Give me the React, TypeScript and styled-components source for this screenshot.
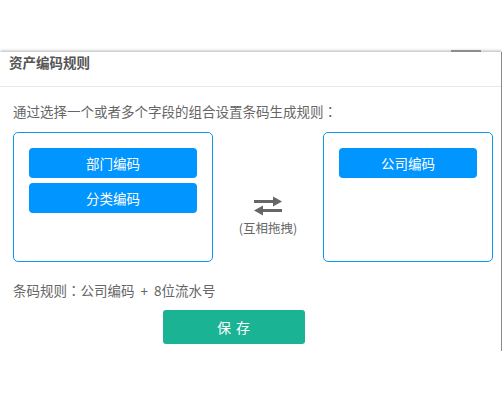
import styled, { createGlobalStyle } from 'styled-components';

// PARAM global
const Global = createGlobalStyle`
  html, body {
    margin: 0;
    padding: 0;
    background: #fff;
    font-family: "Noto Sans CJK SC", "Noto Sans", sans-serif;
  }
`;

// COMPONENT swap arrows
const SwapIcon = () => (
  <svg width='32' height='20' viewBox='0 0 32 20'>
    <path d='M2 5.5 H22' stroke='#666' strokeWidth='3' />
    <path d='M21 0.5 L30 5.5 L21 10.5 Z' fill='#666' />
    <path d='M30 14.5 H10' stroke='#666' strokeWidth='3' />
    <path d='M11 9.5 L2 14.5 L11 19.5 Z' fill='#666' />
  </svg>
);

// COMPONENT field chip
const FieldView = ({ label }: { label: string }) => <Rule.Field>{label}</Rule.Field>;

const App = () => {
  return (
    <>
      <Global />
      <Rule.Dialog>
        <Rule.Header>资产编码规则</Rule.Header>
        <Rule.Body>
          <Rule.Intro>
            通过选择一个或者多个字段的组合设置条码生成规则<Rule.Colon>：</Rule.Colon>
          </Rule.Intro>
          <Rule.Boards>
            <Rule.Board $width={200}>
              <FieldView label='部门编码' />
              <FieldView label='分类编码' />
            </Rule.Board>
            <Rule.Middle>
              <SwapIcon />
              <Rule.Hint>(互相拖拽)</Rule.Hint>
            </Rule.Middle>
            <Rule.Board $width={170}>
              <FieldView label='公司编码' />
            </Rule.Board>
          </Rule.Boards>
          <Rule.Summary>
            条码规则<Rule.Colon>：</Rule.Colon>公司编码 + 8位流水号
          </Rule.Summary>
          <Rule.Footer>
            <Rule.Save>保 存</Rule.Save>
          </Rule.Footer>
        </Rule.Body>
      </Rule.Dialog>
    </>
  );
};

// PARAM style
const Rule = {
  Dialog: styled.div`
    position: relative;
    margin-top: 52px;
    width: 501px;
    height: 299px;
    background: #fff;
    border-right: 1px solid #8a8a8a;
    box-shadow: 0 2px 2px rgba(0, 0, 0, 0.4), 0 -1px 3px rgba(0, 0, 0, 0.3);
    &::before,
    &::after {
      content: '';
      position: absolute;
      left: 451px;
      width: 30px;
      height: 2px;
      background: #8c8c8c;
    }
    &::before {
      top: -2px;
    }
    &::after {
      bottom: -2px;
    }
  `,
  Header: styled.div`
    height: 35px;
    box-sizing: border-box;
    padding: 0 0 0 9px;
    line-height: 20px;
    font-size: 13.5px;
    font-weight: bold;
    color: #555;
    border-bottom: 1px solid #e8e8e8;
  `,
  Body: styled.div`
    padding: 14px 8px 0 13px;
  `,
  Intro: styled.div`
    font-size: 13.5px;
    color: #666;
    line-height: 20px;
  `,
  Colon: styled.span`
    font-family: "Noto Sans CJK TC", sans-serif;
  `,
  Boards: styled.div`
    display: flex;
    margin-top: 11px;
  `,
  Board: styled.div<{ $width: number }>`
    width: ${({ $width }) => $width}px;
    height: 130px;
    box-sizing: border-box;
    border: 1px solid #0d96f2;
    border-radius: 5px;
    padding: 15px 15px 0;
    display: flex;
    flex-direction: column;
    gap: 5px;
  `,
  Field: styled.div`
    height: 30px;
    border-radius: 4px;
    background: #0095ff;
    color: #fff;
    font-size: 13.5px;
    display: flex;
    align-items: center;
    justify-content: center;
  `,
  Middle: styled.div`
    flex: 1;
    display: flex;
    flex-direction: column;
    align-items: center;
    padding-top: 64px;
    gap: 2px;
  `,
  Hint: styled.div`
    font-size: 12.5px;
    color: #666;
  `,
  Summary: styled.div`
    margin-top: 18px;
    font-size: 13.5px;
    color: #666;
    line-height: 20px;
    word-spacing: 3px;
  `,
  Footer: styled.div`
    display: flex;
    justify-content: center;
    margin-top: 10px;
    padding-right: 38px;
  `,
  Save: styled.button`
    width: 142px;
    height: 34px;
    border: none;
    border-radius: 3px;
    background: #1ab394;
    color: #fff;
    font-family: inherit;
    font-size: 14px;
    letter-spacing: 1px;
  `,
};

export default App;
